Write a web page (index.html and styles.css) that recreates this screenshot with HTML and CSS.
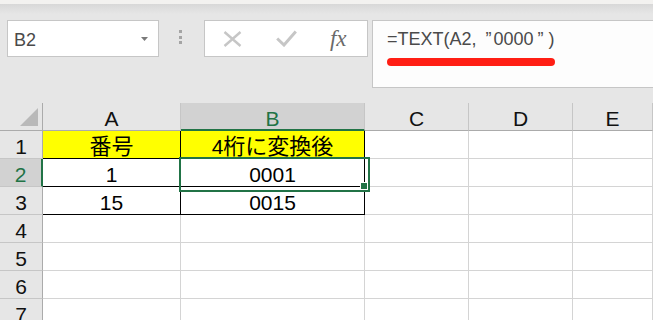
FILE: index.html
```html
<!DOCTYPE html>
<html lang="ja">
<head>
<meta charset="utf-8">
<link rel="stylesheet" href="styles.css">
</head>
<body>
<div class="toolbar">
  <div class="namebox">
    <span class="nb-text">B2</span>
    <svg class="nb-arrow" width="7" height="4" viewBox="0 0 7 4"><path d="M0 0H7L3.5 4Z" fill="#7a7a7a"/></svg>
  </div>
  <div class="grip"><i></i><i></i><i></i></div>
  <div class="btns">
    <span class="slot"><svg width="19" height="16" viewBox="0 0 19 16"><path d="M1.5 1L17.5 15M17.5 1L1.5 15" stroke="#c6c6c6" stroke-width="2.4" fill="none"/></svg></span>
    <span class="slot"><svg width="21" height="17" viewBox="0 0 21 17"><path d="M1.2 8.5L8 15L19.8 1.5" stroke="#c6c6c6" stroke-width="3" fill="none"/></svg></span>
    <span class="slot"><span class="fx">fx</span></span>
  </div>
  <div class="formula">
    <div class="ftext">=TEXT(A2,<span class="q q1">”</span>0000<span class="q q2">”</span>)</div>
    <div class="redline"></div>
  </div>
</div>
<div class="sheet">
  <div class="corner"><svg width="20" height="20" viewBox="0 0 20 20"><path d="M19 1V19H1Z" fill="#b9b9b9"/></svg></div>
  <div class="ch">A</div>
  <div class="ch hsel">B</div>
  <div class="ch">C</div>
  <div class="ch">D</div>
  <div class="ch">E</div>

  <div class="rh">1</div>
  <div class="c bk y"><span class="jp">番号</span></div>
  <div class="c bk y"><span>4</span><span class="jp">桁に変換後</span></div>
  <div class="c"></div><div class="c"></div><div class="c"></div>

  <div class="rh rsel">2</div>
  <div class="c bk">1</div>
  <div class="c bk active">0001<span class="handle"></span></div>
  <div class="c"></div><div class="c"></div><div class="c"></div>

  <div class="rh">3</div>
  <div class="c bk">15</div>
  <div class="c bk">0015</div>
  <div class="c"></div><div class="c"></div><div class="c"></div>

  <div class="rh">4</div>
  <div class="c"></div><div class="c"></div><div class="c"></div><div class="c"></div><div class="c"></div>
  <div class="rh">5</div>
  <div class="c"></div><div class="c"></div><div class="c"></div><div class="c"></div><div class="c"></div>
  <div class="rh">6</div>
  <div class="c"></div><div class="c"></div><div class="c"></div><div class="c"></div><div class="c"></div>
  <div class="rh">7</div>
  <div class="c"></div><div class="c"></div><div class="c"></div><div class="c"></div><div class="c"></div>
</div>
</body>
</html>
```
FILE: styles.css
```css
* { box-sizing: border-box; }
html, body {
  margin: 0;
  padding: 0;
  width: 653px;
  height: 320px;
  overflow: hidden;
  background: #ffffff;
}
.toolbar {
  height: 103px;
  display: flex;
  align-items: flex-start;
  padding: 20px 0 0 7px;
  background: linear-gradient(#f3f2f0 0, #f3f2f0 4px, #d8d8d8 4px, #e6e6e6 14px, #e6e6e6 100%);
  font-family: "Liberation Sans", "Noto Sans CJK JP", sans-serif;
}
.namebox {
  width: 152px;
  height: 37px;
  background: #fff;
  border: 1px solid #c6c6c6;
  display: flex;
  align-items: center;
  justify-content: space-between;
  padding: 0 10px 0 6px;
}
.nb-text {
  font-size: 18px;
  color: #4a4a4a;
  line-height: 20px;
  margin-top: 2px;
}
.nb-arrow { margin-top: 1px; }
.grip {
  margin: 10px 0 0 20px;
  width: 3px;
  display: flex;
  flex-direction: column;
  gap: 2.5px;
}
.grip i {
  display: block;
  width: 3px;
  height: 3px;
  background: #a4a4a4;
}
.btns {
  margin-left: 22px;
  width: 164px;
  height: 37px;
  background: #fff;
  border: 1px solid #c6c6c6;
  display: flex;
  align-items: center;
  padding-left: 1px;
}
.slot {
  width: 54px;
  display: flex;
  justify-content: center;
  align-items: center;
}
.fx {
  font-family: "Liberation Serif", serif;
  font-style: italic;
  font-size: 23px;
  color: #6a6a6a;
  line-height: 20px;
  margin-left: -4px;
  margin-top: 1px;
}
.formula {
  margin-left: 4px;
  flex: 1;
  height: 68px;
  margin-right: -20px;
  background: #fdfdfd;
  border: 1px solid #c6c6c6;
  padding: 6px 0 0 14px;
}
.ftext {
  font-size: 18px;
  color: #4a4a4a;
  line-height: 24px;
  white-space: nowrap;
}
.q {
  display: inline-block;
  width: 17px;
}
.q1 { text-align: right; padding-right: 2px; }
.q2 { width: 15px; text-align: left; padding-left: 4px; }
.redline {
  margin-top: 7px;
  width: 168px;
  height: 8px;
  border-radius: 5px;
  background: #ff1e14;
}

.sheet {
  display: grid;
  grid-template-columns: 43px 138px 184px 104px 104px 1fr;
  grid-auto-rows: 28px;
  font-family: "Liberation Sans", "Noto Sans CJK JP", sans-serif;
  font-size: 21px;
  color: #000;
}
.sheet > div {
  border-right: 1px solid #d4d4d4;
  border-bottom: 1px solid #d4d4d4;
  text-align: center;
  line-height: 24px;
  padding-top: 4px;
  white-space: nowrap;
}
.sheet > .corner {
  background: #e6e6e6;
  border-right: 1px solid #ababab;
  border-bottom: 1px solid #ababab;
  padding: 4px 0 0 19px;
  line-height: 0;
  text-align: left;
}
.sheet > .ch {
  background: #e6e6e6;
  border-right: 1px solid #c6c6c6;
  border-bottom: 1px solid #ababab;
  color: #111;
}
.sheet > .ch.hsel {
  background: #d2d2d2;
  border-bottom: 2px solid #217346;
  color: #217346;
}
.sheet > .rh {
  background: #e6e6e6;
  border-right: 1px solid #ababab;
  border-bottom: 1px solid #c6c6c6;
  color: #111;
}
.sheet > .rh.rsel {
  background: #d2d2d2;
  border-right: 2px solid #217346;
  color: #217346;
}
.sheet > .bk {
  border-right-color: #000;
  border-bottom-color: #000;
}
.sheet > .y { background: #ffff00; }
.jp { font-size: 22px; }
.sheet > .active { position: relative; }
.sheet > .active::after {
  content: "";
  position: absolute;
  left: -2px;
  top: -2px;
  width: 187px;
  height: 31px;
  border: 2px solid #217346;
}
.handle {
  position: absolute;
  left: 179px;
  top: 23px;
  width: 8px;
  height: 8px;
  background: #217346;
  border: 1px solid #fff;
  z-index: 2;
}
```
